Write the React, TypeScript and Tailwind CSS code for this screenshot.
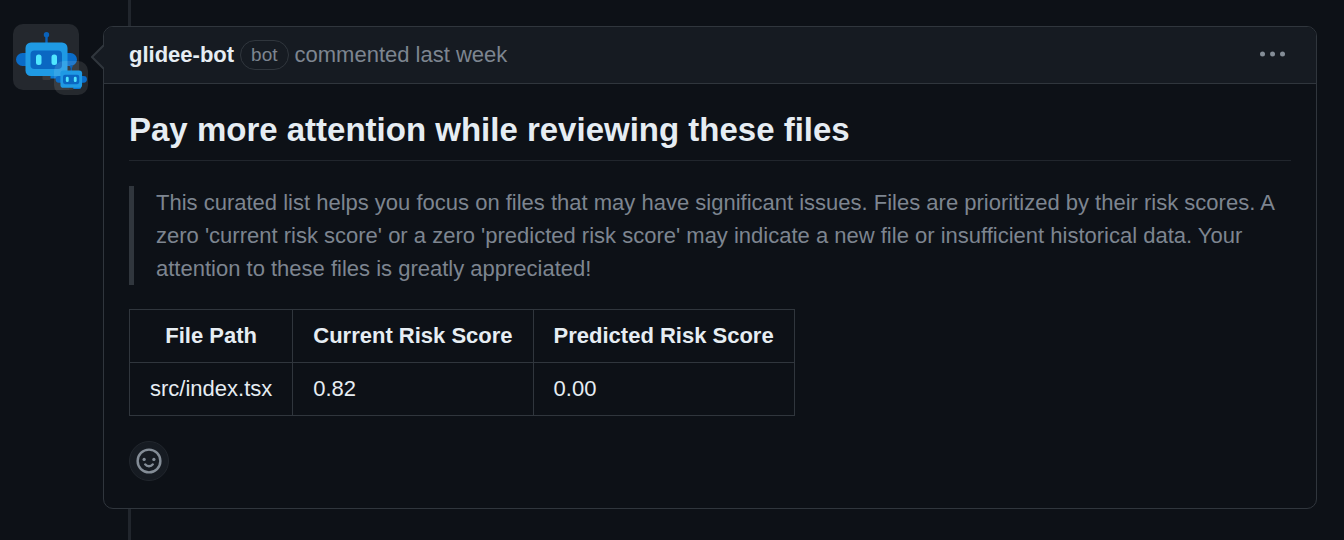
import React from "react";

function Robot({ className }: { className: string }) {
  return (
    <svg viewBox="0 0 66 66" className={className} aria-hidden="true">
      <rect x="32.3" y="11" width="2.4" height="9" fill="#0a62ba" />
      <circle cx="33.5" cy="10.8" r="2.7" fill="#0a62ba" />
      <path d="M14 29H9.5a6.5 6.5 0 0 0 0 13H14zM53 29h4.5a6.5 6.5 0 0 1 0 13H53z" fill="#0a6cc8" />
      <path d="M36 49h17v1.5a4 4 0 0 1-4 4H36z" fill="#0a78d4" />
      <rect x="29.5" y="50" width="8" height="6" rx="1" fill="#39393b" />
      <rect x="12.5" y="18.5" width="42" height="33.5" rx="5.5" fill="#1f9ae4" />
      <rect x="17.5" y="26.5" width="31.5" height="18.5" rx="4" fill="#0a67c2" />
      <rect x="23" y="30.5" width="5.5" height="10.5" rx="2.5" fill="#50e6ff" />
      <rect x="38.5" y="30.5" width="5.5" height="10.5" rx="2.5" fill="#50e6ff" />
    </svg>
  );
}

const columns = ["File Path", "Current Risk Score", "Predicted Risk Score"];
const rows = [["src/index.tsx", "0.82", "0.00"]];

export default function App() {
  return (
    <main className="flex min-h-screen flex-col bg-[#0d1117] font-['Liberation_Sans',Arial,sans-serif] text-[22px] leading-[33px] text-[#e6edf3]">
      <div className="ml-32 h-[26px] w-[3px] bg-[#21262d]" />
      <div className="flex items-start gap-6 pr-[27px] pl-[13px]">
        <a href="#glidee-bot" aria-label="glidee-bot" className="relative -mt-0.5 block size-[66px] shrink-0 rounded-[10px] bg-[#24282e]">
          <Robot className="size-full" />
          <span className="absolute top-[37px] left-[41px] block size-[34px] rounded-[10px] bg-white/10">
            <Robot className="size-full" />
          </span>
        </a>
        <article className="relative min-w-0 grow rounded-[10px] border border-[#30363d]">
          <svg viewBox="0 0 13 26" className="absolute top-[17px] -left-[13px] h-[26px] w-[13px]" aria-hidden="true">
            <path d="M13 1 1 13l12 12z" fill="#161b22" />
            <path d="M13 1 1 13l12 12" fill="none" stroke="#30363d" strokeWidth="2" />
          </svg>
          <header className="flex items-center rounded-t-[9px] border-b border-[#30363d] bg-[#161b22] px-[25px] pt-[11px] pb-3">
            <h3 className="flex grow items-center gap-1.5 text-[#7d8590]">
              <a href="#glidee-bot" className="font-bold text-[#e6edf3]">glidee-bot</a>
              <span className="rounded-full border border-[#30363d] px-2.5 text-[19px] leading-7">bot</span>
              <span>commented last week</span>
            </h3>
            <button type="button" aria-label="Show options" className="flex h-6 items-center px-1 pb-0.5 text-[#848d97]">
              <svg viewBox="0 0 28 6" className="h-1.5 w-7" fill="currentColor" aria-hidden="true">
                <circle cx="3.5" cy="3" r="2.5" />
                <circle cx="13.5" cy="3" r="2.5" />
                <circle cx="23.5" cy="3" r="2.5" />
              </svg>
            </button>
          </header>
          <div className="px-[25px] pt-[25px] pb-[27px]">
            <h1 className="border-b border-[#21262d] pb-2.5 text-[33px] leading-[41px] font-bold">
              Pay more attention while reviewing these files
            </h1>
            <blockquote className="mt-[25px] border-l-[5px] border-[#30363d] pl-[22px] text-[#7d8590]">
              This curated list helps you focus on files that may have significant issues. Files are prioritized by their risk scores. A zero 'current risk score' or a zero 'predicted risk score' may indicate a new file or insufficient historical data. Your attention to these files is greatly appreciated!
            </blockquote>
            <table className="mt-6 border-collapse leading-8">
              <thead>
                <tr>
                  {columns.map((c) => (
                    <th key={c} scope="col" className="border border-[#30363d] px-5 py-2.5 font-bold">{c}</th>
                  ))}
                </tr>
              </thead>
              <tbody>
                {rows.map((r) => (
                  <tr key={r[0]}>
                    {r.map((v, i) => (
                      <td key={i} className="border border-[#30363d] px-5 py-2.5">{v}</td>
                    ))}
                  </tr>
                ))}
              </tbody>
            </table>
            <button type="button" aria-label="Add reaction" className="mt-[25px] flex size-10 items-center justify-center rounded-full border border-[#21262d] bg-[#161b22] text-[#848d97]">
              <svg viewBox="0 0 16 16" className="size-[26px]" fill="none" stroke="currentColor" strokeWidth="1.5" strokeLinecap="round" aria-hidden="true">
                <circle cx="8" cy="8" r="7" />
                <path d="M5.7 10.1C6.2 10.8 7 11.2 8 11.2s1.8-.4 2.3-1.1" />
                <circle cx="5" cy="7" r="1" fill="currentColor" stroke="none" />
                <circle cx="11" cy="7" r="1" fill="currentColor" stroke="none" />
              </svg>
            </button>
          </div>
        </article>
      </div>
      <div className="ml-32 min-h-6 w-[3px] grow bg-[#21262d]" />
    </main>
  );
}
